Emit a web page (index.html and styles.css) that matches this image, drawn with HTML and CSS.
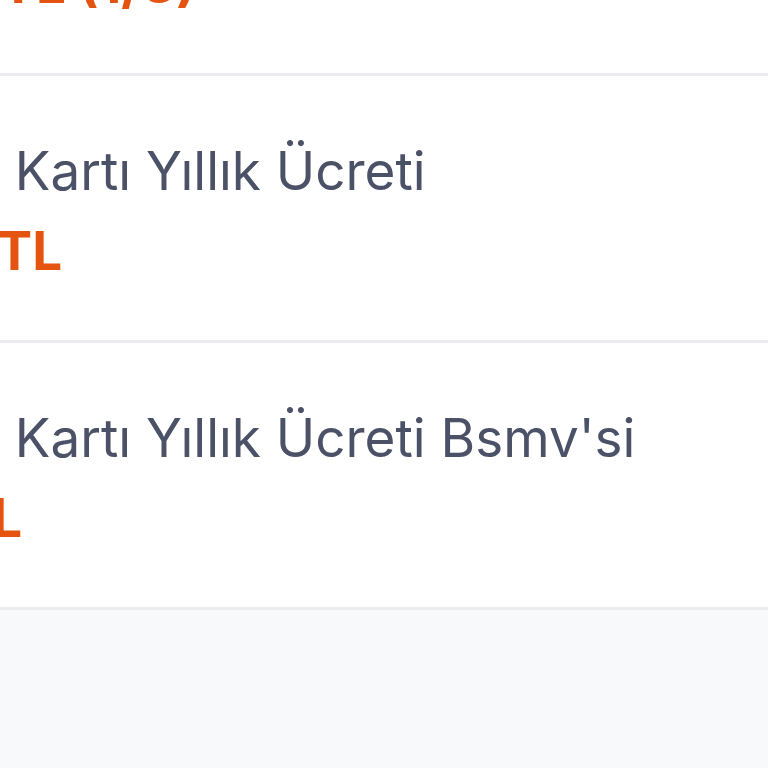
FILE: index.html
```html
<!DOCTYPE html>
<html lang="tr">
<head>
    <meta charset="UTF-8">
    <meta name="viewport" content="width=device-width, initial-scale=1.0">
    <title>Kart Ücretleri</title>
    <link rel="stylesheet" href="styles.css">
</head>
<body>
    <div class="fee-list">
        <div class="fee-item first">
            <div class="fee-amount">250,00 TL (1/3)</div>
        </div>
        <div class="fee-item">
            <div class="fee-name">Kredi Kartı Yıllık Ücreti</div>
            <div class="fee-amount">728,00 TL</div>
        </div>
        <div class="fee-item">
            <div class="fee-name">Kredi Kartı Yıllık Ücreti Bsmv'si</div>
            <div class="fee-amount">37,50 TL</div>
        </div>
    </div>
</body>
</html>
```

FILE: styles.css
```css
body {
    margin: 0;
    background-color: #f8f9fb;
    font-family: Inter, "Noto Sans", sans-serif;
    overflow: hidden;
}
.fee-list {
    display: flex;
    flex-direction: column;
}
.fee-item {
    height: 264px;
    background: #fff;
    border-bottom: 3px solid #ebecef;
    margin-left: -131px;
    display: flex;
    flex-direction: column;
    overflow: hidden;
}
.fee-item.first {
    height: 73px;
}
.fee-item.first .fee-amount {
    margin-top: -48px;
}
.fee-name {
    font-size: 53px;
    line-height: 64px;
    color: #4b5166;
    margin-top: 63px;
    white-space: nowrap;
}
.fee-amount {
    font-size: 53px;
    line-height: 64px;
    font-weight: 700;
    color: #e4530f;
    margin-top: 16px;
    margin-left: -70px;
    white-space: nowrap;
}
```
